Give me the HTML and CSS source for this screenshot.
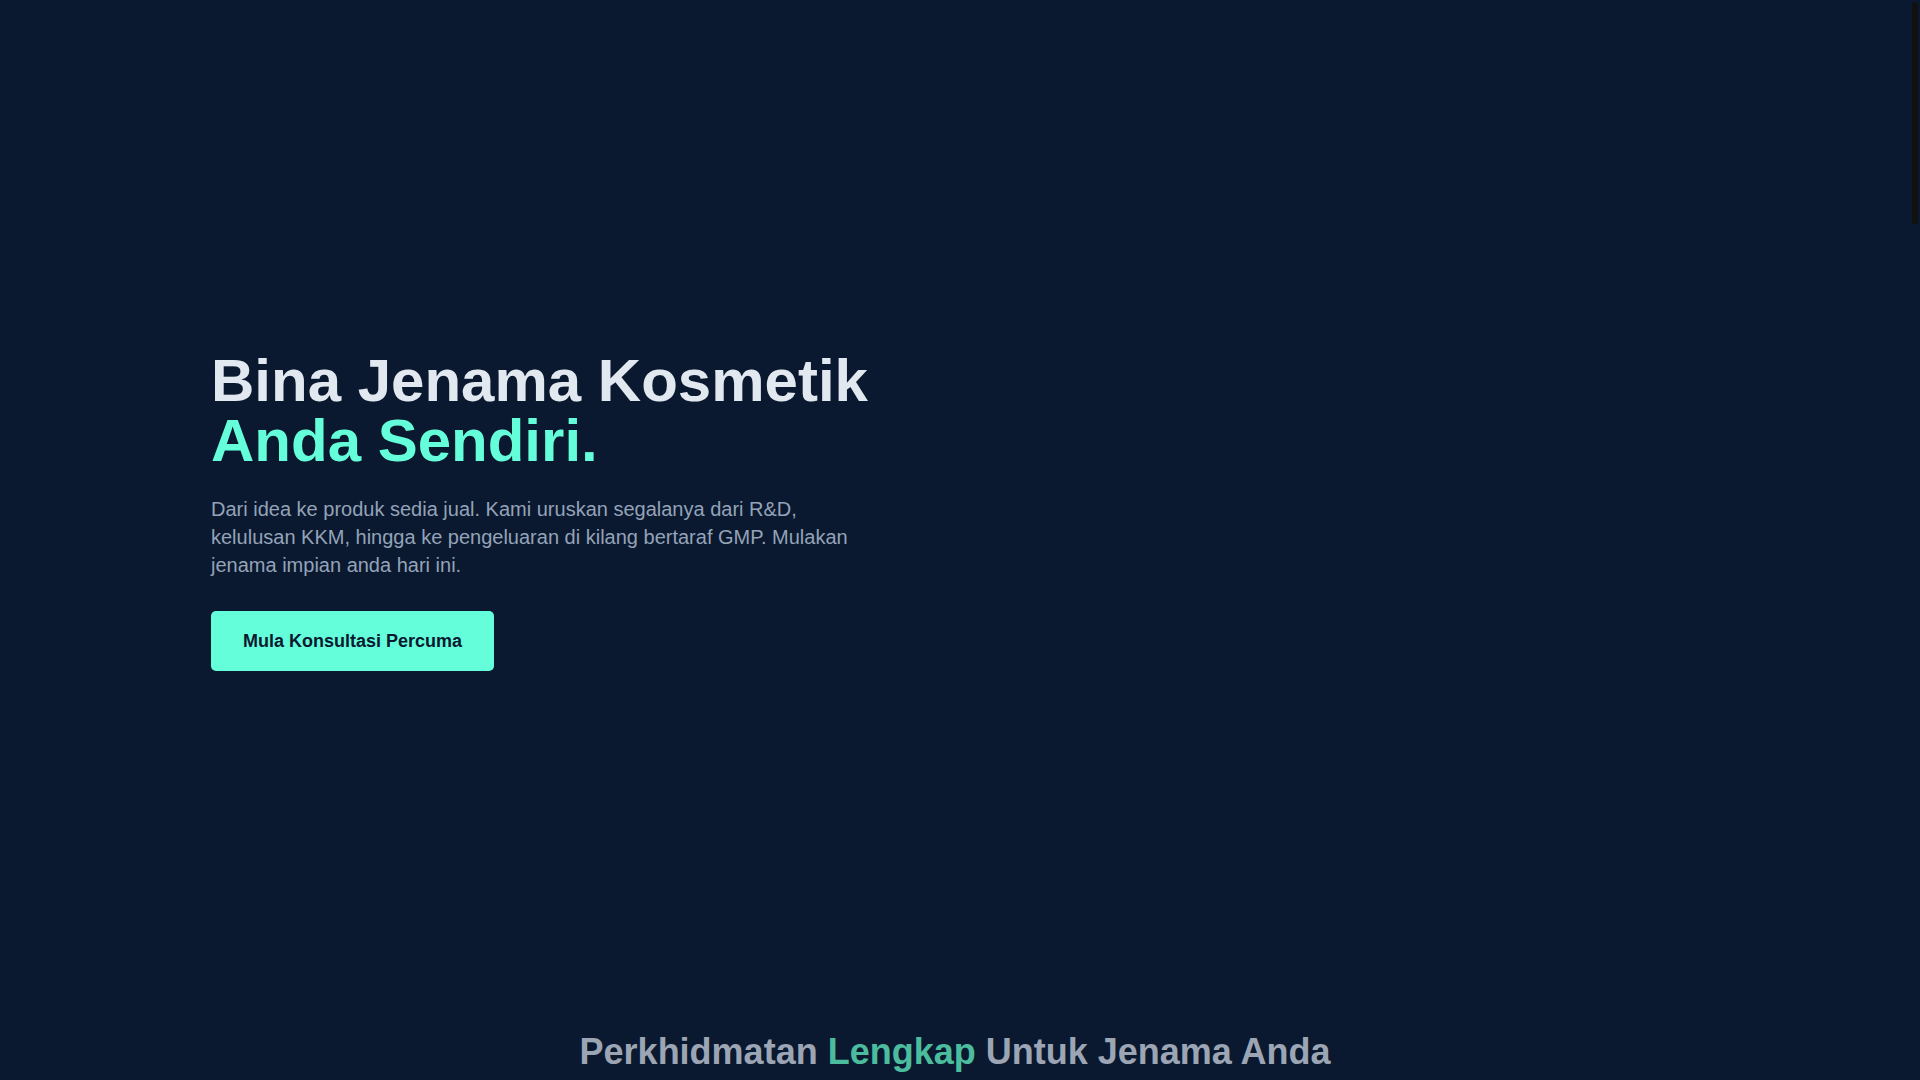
FILE: index.html
```html
<!DOCTYPE html>
<html lang="ms">
<head>
<meta charset="utf-8">
<title>Bina Jenama Kosmetik Anda Sendiri</title>
<link rel="stylesheet" href="styles.css">
</head>
<body>
<main class="page">
  <section class="hero">
    <div class="container hero-grid">
      <div class="hero-copy">
        <h1 class="hero-title">Bina Jenama Kosmetik<br><span class="accent">Anda Sendiri.</span></h1>
        <p class="hero-text">Dari idea ke produk sedia jual. Kami uruskan segalanya dari R&amp;D, kelulusan KKM, hingga ke pengeluaran di kilang bertaraf GMP. Mulakan jenama impian anda hari ini.</p>
        <a class="btn" href="#">Mula Konsultasi Percuma</a>
      </div>
      <div class="hero-media"></div>
    </div>
  </section>
  <section class="services">
    <div class="container">
      <h2 class="section-title">Perkhidmatan <span class="accent-soft">Lengkap</span> Untuk Jenama Anda</h2>
      <div class="service-grid">
        <div class="card"><h3>R&amp;D Formulasi</h3><p>Formulasi khas mengikut konsep jenama anda.</p></div>
        <div class="card"><h3>Kelulusan KKM</h3><p>Urusan notifikasi produk kosmetik dengan KKM.</p></div>
        <div class="card"><h3>Pengeluaran GMP</h3><p>Pengeluaran di kilang bertaraf GMP.</p></div>
      </div>
    </div>
  </section>
</main>
<div class="scrollbar" aria-hidden="true"><div class="scrollbar-thumb"></div></div>
</body>
</html>
```
FILE: styles.css
```css
html { background: #0a192f; }
body {
  margin: 0;
  background: #0a192f;
  font-family: "Liberation Sans", Arial, sans-serif;
  color: #e2e8f0;
  overflow-x: hidden;
}
.page {
  margin-right: 10px;
}
.scrollbar {
  position: fixed;
  top: 0;
  right: 0;
  width: 10px;
  height: 100vh;
  background: #0a192f;
}
.scrollbar-thumb {
  margin: 2px 2px 0;
  height: 222px;
  background: #111111;
  border-radius: 3px;
}
.container {
  max-width: 1536px;
  margin: 0 auto;
  padding: 0 24px;
  box-sizing: border-box;
}
.hero {
  height: 942px;
  padding-top: 80px;
  box-sizing: border-box;
  display: flex;
  align-items: center;
}
.hero .container { width: 100%; }
.hero-grid {
  display: grid;
  grid-template-columns: 1fr 1fr;
  gap: 48px;
}
.hero-title {
  margin: 0 0 24px;
  font-size: 60px;
  line-height: 60px;
  font-weight: 700;
  color: #e2e8f0;
}
.accent { color: #64ffda; }
.hero-text {
  margin: 0 0 32px;
  max-width: 672px;
  font-size: 20px;
  line-height: 28px;
  color: #94a3b8;
}
.btn {
  display: inline-block;
  padding: 16px 32px;
  background: #64ffda;
  color: #0a192f;
  font-size: 18px;
  line-height: 28px;
  font-weight: 700;
  text-decoration: none;
  border-radius: 5px;
}
.services {
  padding-top: 90px;
  min-height: 4260px;
  box-sizing: border-box;
}
.section-title {
  margin: 0 0 64px;
  text-align: center;
  font-size: 36px;
  line-height: 40px;
  font-weight: 700;
  color: #9ca5b4;
}
.accent-soft { color: #4cbc9f; }
.service-grid {
  display: grid;
  grid-template-columns: repeat(3, 1fr);
  gap: 32px;
}
.card {
  padding: 32px;
  border-radius: 8px;
  background: #112240;
}
.card h3 { margin: 0 0 12px; color: #e2e8f0; font-size: 20px; }
.card p { margin: 0; color: #94a3b8; font-size: 16px; line-height: 24px; }
```
